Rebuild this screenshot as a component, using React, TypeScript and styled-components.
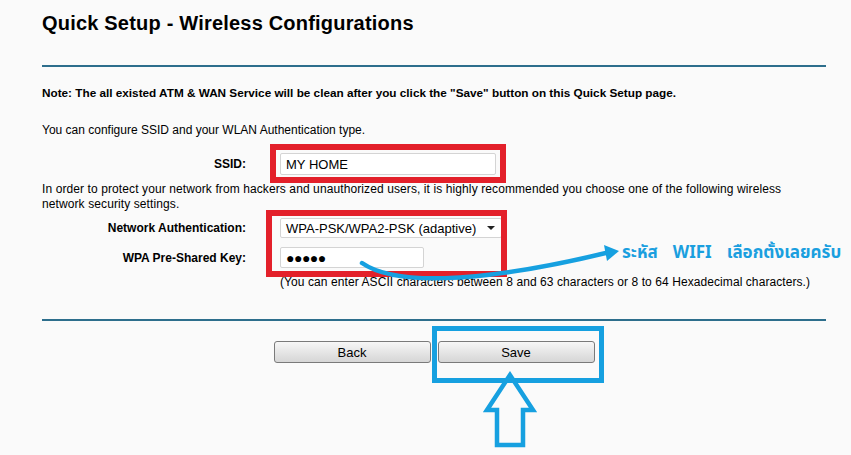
import styled, { createGlobalStyle } from 'styled-components';

const GlobalStyle = createGlobalStyle`
    html, body {
        margin: 0;
        padding: 0;
        background: #fafafa;
    }
    body {
        font-family: "Liberation Sans", Arial, sans-serif;
        color: #000;
    }
`;

const Page = styled.div`
    position: relative;
    width: 851px;
    height: 455px;
    overflow: hidden;
    background: #fafafa;
`;

const Content = styled.div`
    width: 784px;
    margin-left: 42px;
    display: flex;
    flex-direction: column;
`;

const Title = styled.h1`
    margin: 0;
    padding-top: 11px;
    font-size: 20px;
    line-height: 24px;
    font-weight: bold;
    letter-spacing: 0.2px;
`;

const Rule = styled.div<{ $top: number }>`
    height: 2px;
    margin-top: ${p => p.$top}px;
    background: #2d6e8c;
`;

const Note = styled.p`
    margin: 19px 0 0;
    font-size: 11.75px;
    line-height: 14px;
    font-weight: bold;
`;

const Text = styled.p<{ $top: number; $indent?: number; $spacing?: number }>`
    margin: ${p => p.$top}px 0 0 ${p => p.$indent || 0}px;
    font-size: 12px;
    line-height: 15px;
    letter-spacing: ${p => p.$spacing || 0}px;
`;

const Row = styled.div<{ $top: number }>`
    display: grid;
    grid-template-columns: 204px 1fr;
    column-gap: 34px;
    align-items: center;
    margin-top: ${p => p.$top}px;
`;

const Label = styled.label`
    text-align: right;
    font-size: 12px;
    font-weight: bold;
`;

const TextInput = styled.div<{ $width: number; $height: number }>`
    box-sizing: border-box;
    width: ${p => p.$width}px;
    height: ${p => p.$height}px;
    padding: 0 5px;
    display: flex;
    align-items: center;
    background: #fff;
    border: 1px solid #d4d4d4;
    border-radius: 2px;
    font-size: 13px;
`;

const Dots = styled.span`
    font-size: 14px;
    letter-spacing: -0.5px;
`;

const Select = styled.div`
    box-sizing: border-box;
    width: 222px;
    height: 20px;
    padding: 0 5px;
    display: flex;
    align-items: center;
    justify-content: space-between;
    background: #fff;
    border: 1px solid #d4d4d4;
    border-radius: 2px;
    font-size: 13px;
`;

const Caret = styled.span`
    width: 0;
    height: 0;
    border-left: 4px solid transparent;
    border-right: 4px solid transparent;
    border-top: 4px solid #222;
    margin-right: 1px;
`;

const Buttons = styled.div`
    display: flex;
    justify-content: center;
    gap: 7px;
    margin-top: 20px;
`;

const Button = styled.button`
    box-sizing: border-box;
    width: 157px;
    height: 22px;
    padding: 0;
    border: 1px solid #7a7a7a;
    border-radius: 3px;
    background: linear-gradient(#f7f7f7, #e6e6e6 50%, #d6d6d6);
    font-family: "Liberation Sans", Arial, sans-serif;
    font-size: 13px;
    color: #000;
`;

const Overlay = styled.svg`
    position: absolute;
    left: 0;
    top: 0;
    pointer-events: none;
`;

const ThaiNote = styled.div`
    position: absolute;
    left: 622px;
    top: 241px;
    display: flex;
    gap: 15px;
    font-family: Tahoma, "Noto Sans Thai", "Liberation Sans", sans-serif;
    font-size: 17px;
    font-weight: bold;
    line-height: 24px;
    color: #1a9fdf;
    white-space: nowrap;
`;

const RED = '#e3202a';
const BLUE = '#16a0e0';

function Annotations() {
    return (
        <Overlay width="851" height="455" viewBox="0 0 851 455">
            <rect x="273" y="147" width="230" height="33" fill="none" stroke={RED} strokeWidth="6" />
            <rect x="269" y="213" width="235" height="61" fill="none" stroke={RED} strokeWidth="6" />
            <rect x="434.5" y="328.5" width="167" height="52" fill="none" stroke={BLUE} strokeWidth="5" />
            <path
                d="M510 375 L487 410 L497 410 L497 445 L523 445 L523 410 L533 410 Z"
                fill="none"
                stroke={BLUE}
                strokeWidth="4.5"
                strokeLinejoin="miter"
            />
            <path
                d="M362 263 C 392 284, 470 286, 610 252"
                fill="none"
                stroke={BLUE}
                strokeWidth="4.5"
                strokeLinecap="round"
            />
            <path d="M604 245 L619 251 L607 261 Z" fill={BLUE} />
        </Overlay>
    );
}

export default function App() {
    return (
        <Page>
            <GlobalStyle />
            <Content>
                <Title>Quick Setup - Wireless Configurations</Title>
                <Rule $top={30} />
                <Note>
                    Note: The all existed ATM &amp; WAN Service will be clean after you click the "Save" button on this Quick Setup page.
                </Note>
                <Text $top={23}>You can configure SSID and your WLAN Authentication type.</Text>
                <Row $top={15}>
                    <Label>SSID:</Label>
                    <TextInput $width={216} $height={22}>MY HOME</TextInput>
                </Row>
                <Text $top={7} $spacing={0.1}>
                    In order to protect your network from hackers and unauthorized users, it is highly recommended you choose one of the following wireless network security settings.
                </Text>
                <Row $top={6}>
                    <Label>Network Authentication:</Label>
                    <Select>
                        WPA-PSK/WPA2-PSK (adaptive)
                        <Caret />
                    </Select>
                </Row>
                <Row $top={9}>
                    <Label>WPA Pre-Shared Key:</Label>
                    <TextInput $width={144} $height={21}>
                        <Dots>●●●●●</Dots>
                    </TextInput>
                </Row>
                <Text $top={7} $indent={238} $spacing={0.08}>
                    (You can enter ASCII characters between 8 and 63 characters or 8 to 64 Hexadecimal characters.)
                </Text>
                <Rule $top={29} />
                <Buttons>
                    <Button>Back</Button>
                    <Button>Save</Button>
                </Buttons>
            </Content>
            <Annotations />
            <ThaiNote>
                <span>ระหัส</span>
                <span>WIFI</span>
                <span>เลือกตั้งเลยครับ</span>
            </ThaiNote>
        </Page>
    );
}
